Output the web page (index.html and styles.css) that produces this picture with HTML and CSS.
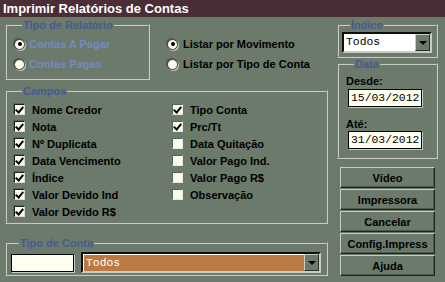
FILE: index.html
```html
<!DOCTYPE html>
<html lang="pt-BR">
<head>
  <meta charset="UTF-8">
  <title>Imprimir Relatórios de Contas</title>
  <link rel="stylesheet" href="styles.css">
</head>
<body>
  <div class="titlebar">Imprimir Relatórios de Contas</div>

  <div class="content">
    <div class="left">
      <div class="top-row">
        <fieldset class="group group-tipo">
          <legend>Tipo de Relatório</legend>
          <label class="radio disabled"><span class="dot on"></span>Contas A Pagar</label>
          <label class="radio disabled"><span class="dot"></span>Contas Pagas</label>
        </fieldset>
        <div class="listar">
          <label class="radio"><span class="dot on"></span>Listar por Movimento</label>
          <label class="radio"><span class="dot"></span>Listar por Tipo de Conta</label>
        </div>
      </div>

      <fieldset class="group group-campos">
        <legend>Campos</legend>
        <div class="campos-grid">
          <div class="col">
            <label class="check"><span class="box on"></span>Nome Credor</label>
            <label class="check"><span class="box on"></span>Nota</label>
            <label class="check"><span class="box on"></span>Nº Duplicata</label>
            <label class="check"><span class="box on"></span>Data Vencimento</label>
            <label class="check"><span class="box on"></span>Índice</label>
            <label class="check"><span class="box on"></span>Valor Devido Ind</label>
            <label class="check"><span class="box on"></span>Valor Devido R$</label>
          </div>
          <div class="col col-right">
            <label class="check"><span class="box on"></span>Tipo Conta</label>
            <label class="check"><span class="box on"></span>Prc/Tt</label>
            <label class="check"><span class="box"></span>Data Quitação</label>
            <label class="check"><span class="box"></span>Valor Pago Ind.</label>
            <label class="check"><span class="box"></span>Valor Pago R$</label>
            <label class="check"><span class="box"></span>Observação</label>
          </div>
        </div>
      </fieldset>

      <fieldset class="group group-conta">
        <legend>Tipo de Conta</legend>
        <div class="conta-row">
          <div class="code-box"></div>
          <div class="select select-orange">
            <span class="value">Todos</span>
            <span class="arrow"></span>
          </div>
        </div>
      </fieldset>
    </div>

    <div class="right">
      <fieldset class="group group-indice">
        <legend>Índice</legend>
        <div class="select select-white">
          <span class="value">Todos</span>
          <span class="arrow"></span>
        </div>
      </fieldset>

      <fieldset class="group group-data">
        <legend>Data</legend>
        <div class="field-label">Desde:</div>
        <div class="date-box">15/03/2012</div>
        <div class="field-label label-ate">Até:</div>
        <div class="date-box">31/03/2012</div>
      </fieldset>

      <div class="buttons">
        <button class="btn">Vídeo</button>
        <button class="btn">Impressora</button>
        <button class="btn">Cancelar</button>
        <button class="btn">Config.Impress</button>
        <button class="btn">Ajuda</button>
      </div>
    </div>
  </div>
</body>
</html>
```

FILE: styles.css
```css
body {
  margin: 0;
  width: 445px;
  height: 282px;
  overflow: hidden;
  background: #6b7a6a;
  font-family: 'Liberation Sans', Arial, sans-serif;
  font-size: 11px;
  font-weight: bold;
  color: #000;
}

.titlebar {
  height: 17px;
  line-height: 17px;
  padding-left: 3px;
  background: #4a2e37;
  color: #fff;
  font-size: 13px;
}

.content {
  display: grid;
  grid-template-columns: 323px 101px;
  column-gap: 9px;
  padding-left: 5px;
  margin-top: 2px;
}

/* group boxes */
.group {
  margin: 0;
  padding: 0;
  min-width: 0;
  border: 2px groove #c6cec4;
}

.group legend {
  margin-left: 8px;
  padding: 0 1px;
  font-size: 11px;
  line-height: 12px;
  color: #465a95;
}

/* radios */
.top-row {
  display: flex;
}

.group-tipo {
  width: 145px;
  box-sizing: border-box;
  padding: 3px 0 4px 7px;
}

.listar {
  margin-left: 17px;
  padding-top: 15px;
}

.radio {
  display: flex;
  align-items: center;
  height: 20px;
  gap: 5px;
  white-space: nowrap;
}

.radio.disabled {
  gap: 4px;
  color: #7689c0;
}

.dot {
  width: 11px;
  height: 11px;
  box-sizing: border-box;
  border-radius: 50%;
  background: #fbfbee;
  border: 1px solid #3a3f38;
  box-shadow: -1px -1px 0 #4e574d, 1px 1px 0 #b9c2b7;
  display: flex;
  align-items: center;
  justify-content: center;
}

.dot.on::after {
  content: '';
  width: 4px;
  height: 4px;
  border-radius: 50%;
  background: #000;
}

/* checkboxes */
.group-campos {
  margin-top: 5px;
  padding: 4px 0 2px 7px;
}

.campos-grid {
  display: grid;
  grid-template-columns: 158px auto;
}

.check {
  display: flex;
  align-items: center;
  height: 17px;
  gap: 7px;
  white-space: nowrap;
}

.box {
  position: relative;
  width: 11px;
  height: 11px;
  box-sizing: border-box;
  background: #fbfbee;
  border: 1px solid;
  border-color: #1c1f1b #d9ddd3 #d9ddd3 #1c1f1b;
  box-shadow: -1px -1px 0 #59635a;
}

.col-right .box {
  border-color: #59635a #e6e8de #e6e8de #59635a;
  box-shadow: none;
}

.box.on::after {
  content: '';
  position: absolute;
  left: 2px;
  top: 0;
  width: 3px;
  height: 6px;
  border: solid #000;
  border-width: 0 2px 2px 0;
  transform: rotate(40deg);
}

/* tipo de conta */
.group-conta {
  margin-top: 13px;
  padding: 3px 5px 1px 4px;
}

.conta-row {
  display: flex;
  align-items: center;
  gap: 7px;
}

.code-box {
  width: 63px;
  height: 18px;
  box-sizing: border-box;
  background: #fffff0;
  border: 1px solid #000;
  box-shadow: 1px 1px 0 #c6cec4;
}

/* selects */
.select {
  display: flex;
  height: 21px;
  box-sizing: border-box;
  border: 2px solid #0d0f0d;
  border-right-color: #c6cec4;
  border-bottom-color: #c6cec4;
}

.select .value {
  flex: 1;
  padding-left: 2px;
  font-family: 'Liberation Mono', 'Courier New', monospace;
  font-weight: normal;
  font-size: 11.4px;
  line-height: 17px;
}

.select-white {
  width: 90px;
  background: #fff;
}

.select-orange {
  flex: 1;
  background: #bb7a41;
  color: #fff;
}

.select-orange .value {
  border-top: 1px solid #fff;
  border-left: 1px solid #fff;
  line-height: 16px;
}

.arrow {
  width: 15px;
  box-sizing: border-box;
  background: #6b7a6a;
  border: 1px solid;
  border-color: #c6cec4 #2b322b #2b322b #c6cec4;
  display: flex;
  align-items: center;
  justify-content: center;
}

.arrow::after {
  content: '';
  border-left: 4px solid transparent;
  border-right: 4px solid transparent;
  border-top: 4px solid #000;
}

/* right column */
.group-indice {
  padding: 1px 0 3px 3px;
}

.group-data {
  padding: 5px 0 8px 7px;
}

.field-label {
  line-height: 13px;
}

.label-ate {
  margin-top: 11px;
}

.date-box {
  width: 74px;
  height: 18px;
  margin: 1px 0 0 2px;
  box-sizing: border-box;
  background: #fffff0;
  border: 1px solid #000;
  box-shadow: 1px 1px 0 #c6cec4;
  font-family: 'Liberation Mono', 'Courier New', monospace;
  font-weight: normal;
  font-size: 11.4px;
  line-height: 16px;
  padding-left: 2px;
}

.label-ate + .date-box {
  margin-top: 0;
}

.buttons {
  display: flex;
  flex-direction: column;
  gap: 1px;
  margin: 8px 0 0 3px;
}

.btn {
  width: 95px;
  height: 21px;
  padding: 0;
  background: #6b7a6a;
  border: 1px solid;
  border-color: #c6cec4 #1f241f #1f241f #c6cec4;
  box-shadow: inset -1px -1px 0 #4d584c;
  font-family: 'Liberation Sans', Arial, sans-serif;
  font-size: 11px;
  font-weight: bold;
  color: #000;
}
```
